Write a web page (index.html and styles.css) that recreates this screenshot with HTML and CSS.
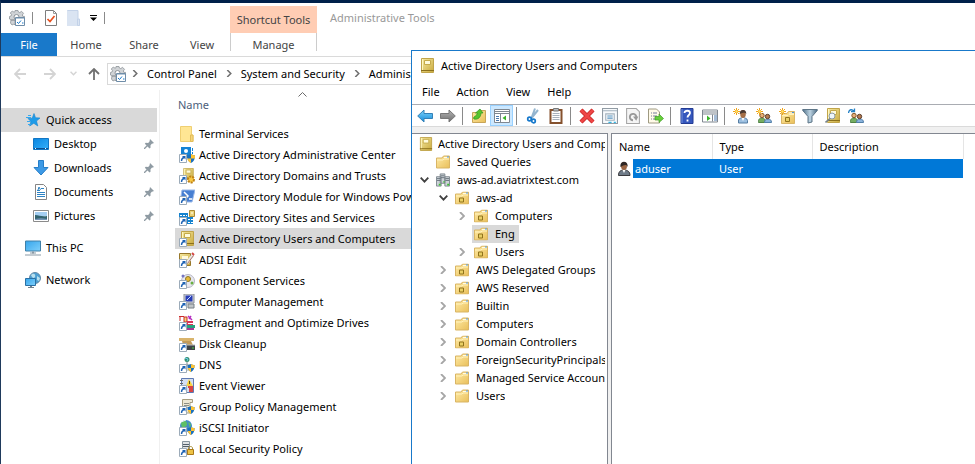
FILE: index.html
```html
<!DOCTYPE html>
<html lang="en">
<head>
<meta charset="utf-8">
<title>Administrative Tools</title>
<link rel="stylesheet" href="styles.css">
</head>
<body>
<svg class="defs" aria-hidden="true">
  <defs>
    <linearGradient id="g-folder" x1="0" y1="0" x2="1" y2="1"><stop offset="0" stop-color="#ffeba6"/><stop offset="1" stop-color="#e9bf5a"/></linearGradient>
    <linearGradient id="g-book" x1="0" y1="0" x2="1" y2="1"><stop offset="0" stop-color="#f6eaa2"/><stop offset="1" stop-color="#c9a93c"/></linearGradient>
    <linearGradient id="g-screen" x1="0" y1="0" x2="1" y2="1"><stop offset="0" stop-color="#35a5ec"/><stop offset="1" stop-color="#7fd0fb"/></linearGradient>
    <linearGradient id="g-desk" x1="0" y1="0" x2="1" y2="1"><stop offset="0" stop-color="#0a86e0"/><stop offset="1" stop-color="#35b0fb"/></linearGradient>
    <linearGradient id="g-blue" x1="0" y1="0" x2="0" y2="1"><stop offset="0" stop-color="#7fd4fb"/><stop offset="1" stop-color="#1489d8"/></linearGradient>
    <linearGradient id="g-grey" x1="0" y1="0" x2="0" y2="1"><stop offset="0" stop-color="#b5b5b5"/><stop offset="1" stop-color="#6d6d6d"/></linearGradient>
    <linearGradient id="g-funnel" x1="0" y1="0" x2="1" y2="0"><stop offset="0" stop-color="#4f7088"/><stop offset=".5" stop-color="#bcd3e2"/><stop offset="1" stop-color="#4b6a82"/></linearGradient>
  </defs>
  <symbol id="gear" viewBox="0 0 16 16">
    <path d="M6 .5h3l.4 1.500 1.400.6L12.500 1.300 14.500 3.300 13.300 5l.6 1.400H15.500V9L13 10H2L.5 9V6.500L2 6l.6-1.300L1.300 3l2-2L5 2.200l1-.5zM2 10h4v5l-1-1-2 1-1.500-2z" fill="#d0d3d6" stroke="#8d9398" stroke-width=".8"/>
    <circle cx="7.500" cy="7" r="2.500" fill="#fff" stroke="#8d9398"/>
    <path d="M6.500 7.500h9v8h-9z" fill="#fff" stroke="#6f8da8"/><path d="M7 8.500h8" stroke="#b6c8d8"/>
    <path d="m8 12 1.500 1.500L12 10.500M13 13h1.500" fill="none" stroke="#1979ca"/>
  </symbol>
  <symbol id="check" viewBox="0 0 12 16"><path d="M.5.500h8l3 3v12H.5z" fill="#fff" stroke="#7d7d7d"/><path d="M8.500.500v3h3" fill="none" stroke="#9a9a9a"/><path d="m2.500 9 2.500 2.500L9.500 6" fill="none" stroke="#e8501e" stroke-width="1.700"/></symbol>
  <symbol id="newfolder" viewBox="0 0 13 16"><path d="M0 0h11v9h2v7H0z" fill="#dae4f2"/><path d="M.5.500h10.500v9M10.500 9v6.500h2V9z" fill="none" stroke="#c3d2e8"/></symbol>
  <symbol id="star" viewBox="0 0 16 14"><path d="m9 .5 1.500 4.200L15 5l-3.500 3 1.300 5L8.800 10.300 4.700 13l1.200-4.600L3 5.500l4.200-.3z" fill="#1e9be8" stroke="#1683cf" stroke-width=".6"/><path d="M1 4.500h5M2 8.500h4M3 11.500h3M3 2.500h3" stroke="#35a8ef"/></symbol>
  <symbol id="desktop" viewBox="0 0 16 12"><path d="M.5.500h15v11H.5z" fill="url(#g-desk)" stroke="#1276c4"/><path d="M1 10.500h14" stroke="#0b4f91"/><path d="M2 10.500h2M12 10.500h2" stroke="#fff" stroke-dasharray="1 1"/></symbol>
  <symbol id="download" viewBox="0 0 16 16"><path d="M5.500.500h5v7h4.500L8 15 1 7.500h4.500z" fill="#3d9ae6" stroke="#267ec8"/></symbol>
  <symbol id="document" viewBox="0 0 12 16"><path d="M.5.500h8l3 3v12H.5z" fill="#fff" stroke="#858585"/><path d="M2 6.500h3M2 8.500h8M2 10.500h8M2 12.500h8M6 4.500h3" stroke="#2d83c4"/><path d="m3 6 1-3 1.500 3" fill="none" stroke="#2d83c4"/></symbol>
  <symbol id="picture" viewBox="0 0 16 12"><path d="M.5.500h15v11H.5z" fill="#fff" stroke="#8b8b8b"/><path d="M2 2h12v4H2z" fill="#a4cef2"/><path d="M2 5c4 0 7 2 12 1v4H2z" fill="#31636f"/><path d="M2 9c4-1 8-1 12 0v1H2z" fill="#7292b4"/></symbol>
  <symbol id="pc" viewBox="0 0 16 15"><path d="M.5.500h15v10H.5z" fill="url(#g-screen)" stroke="#4080a8"/><path d="M7 11h2v2H7z" fill="#8a9aa6"/><path d="M0 14.500h16M5 12.500h6" stroke="#8a9aa6"/></symbol>
  <symbol id="network" viewBox="0 0 16 16"><circle cx="10" cy="6" r="5.500" fill="#4c9fd2" stroke="#6288a4"/><path d="M6 3c3-3 5 0 4 2S7 6 6 3zM12 4l3 2-1 3-2-1z" fill="#b9e0ee"/><path d="M.5 6.500h10v7H.5z" fill="url(#g-screen)" stroke="#2b70a4"/><path d="M3 15.500h6M5 14.500h2" stroke="#72828e"/></symbol>
  <symbol id="pin" viewBox="0 0 10 10"><path d="M6 0l4 4-1.200.600L7.800 4.800 6.500 6.200v2.500L5.500 9.500 .8 4.800l.9-1 2.500.2L5.500 2.500z" fill="#8f9ba3"/><path d="M3.500 6.500 0 10" stroke="#8f9ba3" stroke-width="1.300"/></symbol>
  <symbol id="lnk" viewBox="0 0 16 16"><path d="M.5 7.500h7v8h-7z" fill="#fff" stroke="#9cabb9"/><path d="M2.500 14c0-2 .5-3 2.500-3.500" fill="none" stroke="#1d62b4" stroke-width="1.400"/><path d="M3 9h3.500v3.500z" fill="#1d62b4"/></symbol>
  <symbol id="shield" viewBox="0 0 8 9"><path d="M4 0c1.300 1 2.500 1.200 4 1.200C8 5 7 7.500 4 9 1 7.500 0 5 0 1.200 1.500 1.200 2.700 1 4 0z" fill="#1b70bd"/><path d="M4 0c1.300 1 2.500 1.200 4 1.200V4.500H4zM.4 4.500H4V9C2 8 .8 6.500.4 4.500z" fill="#ffc330"/></symbol>
  <symbol id="book" viewBox="0 0 13 15"><path d="M.5.500h12v14H.5z" fill="url(#g-book)" stroke="#c0a44a"/><path d="M3.500 2.500h6v4h-6z" fill="#fffbdc" stroke="#c5aa4a"/><path d="M0 12.500h13" stroke="#8b701c"/><path d="M1.500 1v11" stroke="#fff7bf"/></symbol>
  <symbol id="folder-tall" viewBox="0 0 14 16"><path d="M.5.500h11V9h1.500v6.500H.5z" fill="#ffe694" stroke="#efcf72"/><path d="M10.500 9v6.500H13V9z" fill="#f7d578" stroke="#e2bc59"/></symbol>
  <symbol id="s-center" viewBox="0 0 16 16"><path d="M2 0h10v11H2z" fill="#1482d4"/><circle cx="7" cy="4" r="2" fill="#fff"/><path d="M13.500 1v6" stroke="#1482d4" stroke-dasharray="3 1"/><use href="#lnk" width="16" height="16"/><use href="#shield" x="8" y="7" width="8" height="9"/></symbol>
  <symbol id="s-trust" viewBox="0 0 16 16"><use href="#book" x="3" y="0" width="13" height="12"/><use href="#lnk" width="16" height="16"/><circle cx="12" cy="11.500" r="3" fill="#f8c844" stroke="#bf8115" stroke-width="2" stroke-dasharray="2 1"/></symbol>
  <symbol id="s-shell" viewBox="0 0 16 16"><path d="M3 1h13l-3 12H1z" fill="#477fd2" stroke="#9ab9e9"/><path d="m5 3 4 4-4 4M10 10h3" stroke="#fff" stroke-width="1.500" fill="none"/><use href="#lnk" width="16" height="16"/></symbol>
  <symbol id="s-sites" viewBox="0 0 16 16"><path d="M0 3h9v5H0zM8 7h6v7H8z" fill="#1683cf"/><path d="M1 5.500h7M9 9.500h5M9 12.500h5" stroke="#fff" stroke-dasharray="2 1"/><path d="M10.500.500h5v6h-5z" fill="#ead277" stroke="#ac8a34"/><path d="M12 3h2" stroke="#fff"/><use href="#lnk" width="16" height="16"/></symbol>
  <symbol id="s-users" viewBox="0 0 16 16"><use href="#book" x="2" y="0" width="13" height="15"/><use href="#lnk" width="16" height="16"/></symbol>
  <symbol id="s-adsi" viewBox="0 0 16 16"><path d="M.5 1.500h11v12H.5z" fill="url(#g-book)" stroke="#98782a"/><path d="M3 4h6v3H3z" fill="#fff9dc"/><path d="m8 11 6-8" stroke="#e7e7e7" stroke-width="3"/><path d="m8.500 11.500 6-8" stroke="#b1756b"/><path d="m13 1 2 2" stroke="#d44845" stroke-width="2"/><use href="#lnk" width="16" height="16"/></symbol>
  <symbol id="s-component" viewBox="0 0 16 16"><circle cx="9" cy="8" r="6.500" fill="#e7e7ee" stroke="#b7b7c5"/><circle cx="9" cy="6" r="2.500" fill="#e8bb36" stroke="#8c7628"/><circle cx="13" cy="10" r="1.500" fill="#68af42"/><circle cx="4" cy="3" r="1.500" fill="#7474c2"/><use href="#lnk" width="16" height="16"/></symbol>
  <symbol id="s-computer" viewBox="0 0 16 16"><path d="M5 0h10v9H5z" fill="#d2d4d8" stroke="#8c9098"/><path d="M6.500 1.500h7v6h-7z" fill="#283eb8"/><path d="m8 6 4-4" stroke="#c9dcff"/><path d="M9 10h6v4H9z" fill="#bfc4c7" stroke="#788087"/><use href="#lnk" width="16" height="16"/></symbol>
  <symbol id="s-defrag" viewBox="0 0 16 16"><path d="M0 1.500h5M1 2v4M5 2h3v5H5z" stroke="#ca2a2a" fill="#f2d67a"/><path d="m9 1 4 4M12 1l-2 3" stroke="#b52cc0" stroke-width="1.500"/><path d="M8 6h6v4H8z" fill="#d93558"/><path d="M8 10h8v3H8z" fill="#26a37d"/><path d="M8 13h7v2H8z" fill="#a93994"/><path d="M9 8.500h6" stroke="#fff"/><use href="#lnk" width="16" height="16"/></symbol>
  <symbol id="s-disk" viewBox="0 0 16 16"><path d="M0 2h15v3H0z" fill="#d9b46c"/><path d="M3 5h9l2 4H4z" fill="#c29b5a"/><path d="M8 9h8v5H8z" fill="#3f4346"/><path d="M8 9h8" stroke="#b9bdc0"/><path d="M13 12h2" stroke="#48cd45"/><use href="#lnk" width="16" height="16"/></symbol>
  <symbol id="s-dns" viewBox="0 0 16 16"><circle cx="8" cy="2.500" r="2.500" fill="#33916d"/><path d="m6 1 3 1-1 2" stroke="#72caf2" fill="none"/><path d="M8 5v3M3 8h10" stroke="#7d8890"/><path d="M8 8h5v6H8z" fill="#ccd3d8"/><use href="#lnk" width="16" height="16"/><use href="#shield" x="8" y="7" width="8" height="8"/></symbol>
  <symbol id="s-event" viewBox="0 0 16 16"><path d="M2.500.500h12v14h-12z" fill="#d3def2" stroke="#5d79b2"/><path d="M1 2.500h3M1 5.500h3" stroke="#666"/><path d="m10 1 4 7H7z" fill="#f7d241"/><path d="M10.500 3v3" stroke="#594d13"/><path d="M9 9h4v2h-2v2h3" fill="none" stroke="#d94545" stroke-width="2"/><use href="#lnk" width="16" height="16"/></symbol>
  <symbol id="s-group" viewBox="0 0 16 16"><path d="M3.500.500h10v3H11V14H3.500z" fill="#eee8d4" stroke="#a79d7e"/><path d="M5 4.500h5M5 6.500h5" stroke="#8c8e85"/><use href="#lnk" width="16" height="16"/><use href="#shield" x="8" y="7" width="8" height="8"/></symbol>
  <symbol id="s-iscsi" viewBox="0 0 16 16"><circle cx="7" cy="6" r="6" fill="#418cc4"/><path d="M2 3c3-4 6-2 6 1S5 7 3 8zM9 2l3 2-1 4z" fill="#5ec064"/><path d="M2 2 7 0" stroke="#eff8ff"/><use href="#lnk" width="16" height="16"/><use href="#shield" x="8" y="7" width="8" height="8"/></symbol>
  <symbol id="s-security" viewBox="0 0 16 16"><path d="M3.500.500h7v13h-7z" fill="#dfe3e6" stroke="#87949e"/><path d="M4 3.500h6M4 5.500h6" stroke="#54606a"/><path d="M9.500 9V7c0-2 4-2 4 0v2" fill="none" stroke="#a8903d"/><path d="M8.500 8.500h6v5h-6z" fill="#edc245" stroke="#a97818"/><use href="#lnk" width="16" height="16"/></symbol>
  <symbol id="folder" viewBox="0 0 14 13"><path d="M.5 12.500v-10H6L7.500.500h6v12z" fill="url(#g-folder)" stroke="#d9b565"/><path d="M8 2h5" stroke="#fffbe8"/><path d="M11 1.500h2" stroke="#4a93d8"/><path d="M1 4.500h6l1-1h5" fill="none" stroke="#fff2bc"/></symbol>
  <symbol id="ou" viewBox="0 0 14 13"><use href="#folder" width="14" height="13"/><path d="M4.500 6.500h4v4h-4z" fill="#e9cf63" stroke="#90731d"/></symbol>
  <symbol id="domain" viewBox="0 0 15 14"><path d="M4.500.500h5v10h-5zM.5 3.500h5v10h-5zM9.500 3.500h5v10h-5z" fill="#cdd3d8" stroke="#7b858d"/><path d="M5 2.500h4M5 4.500h4M1 5.500h4M1 7.500h4M10 5.500h4M10 7.500h4" stroke="#66727b"/><path d="M3 12h2M12 12h2M8 9h1" stroke="#39c42b" stroke-width="2"/></symbol>
  <symbol id="t-back" viewBox="0 0 16 14"><path d="M.7 7 7 1v3.500h8.500v5H7V13z" fill="url(#g-blue)" stroke="#3481b7"/></symbol>
  <symbol id="t-fwd" viewBox="0 0 16 14"><path d="M15.300 7 9 1v3.500H.5v5H9V13z" fill="url(#g-grey)" stroke="#777"/></symbol>
  <symbol id="t-up" viewBox="0 0 16 16"><path d="M1.500 14.500v-10h6l1-2h6v12z" fill="url(#g-folder)" stroke="#c8a558"/><path d="M2.500 10C3 8 6 8 6.500 5H4.500L9 1l3 4H10c0 4-3 7-7 6z" fill="#57c52c" stroke="#2e921f" stroke-width=".7"/></symbol>
  <symbol id="t-tree" viewBox="0 0 16 14"><path d="M.5.500h15v13H.5z" fill="#fff" stroke="#7f8790"/><path d="M1 2.500h14M1 4.500h14M6.500 5v8" stroke="#7f8790"/><path d="M2 7.500h3M2 9.500h3M2 11.500h3" stroke="#4a78ad"/><path d="M12 6.500v5L8.500 9z" fill="#3ab429"/></symbol>
  <symbol id="t-cut" viewBox="0 0 13 16"><path d="M8.500.500 5 10M11.500 2 5 10" stroke="#94b5cf" stroke-width="2"/><circle cx="3" cy="11" r="1.800" fill="none" stroke="#1678cb" stroke-width="1.700"/><circle cx="7" cy="13" r="1.800" fill="none" stroke="#1678cb" stroke-width="1.700"/></symbol>
  <symbol id="t-paste" viewBox="0 0 13 16"><path d="M1 2h11v13H1z" fill="#fff" stroke="#85512d" stroke-width="2"/><path d="M4 .5h5V3H4z" fill="#b8bcc0" stroke="#777"/><path d="M3 5.500h7M3 7.500h7M3 9.500h7M3 11.500h7" stroke="#a8b2bd"/></symbol>
  <symbol id="t-del" viewBox="0 0 16 16"><path d="m2 2 12 12M14 2 2 14" stroke="#c92a2a" stroke-width="4.400"/><path d="m2 2 12 12M14 2 2 14" stroke="#ef4545" stroke-width="2.600"/></symbol>
  <symbol id="t-props" viewBox="0 0 15 15"><path d="M.5.500h14v14H.5z" fill="#f7fafc" stroke="#919ba4"/><path d="M1 2.500h13M3 5.500h9M3 11.500h9M3.500 5v7M11.500 5v7" stroke="#a3b1bc"/><path d="M5 7.500h5M5 9.500h5" stroke="#5994bf"/><path d="M6 13.500h3M11 13.500h2" stroke="#36b8e5"/></symbol>
  <symbol id="t-refresh" viewBox="0 0 13 15"><path d="M.5.500h9l3 3v11H.5z" fill="#f5f5f5" stroke="#a6a6a6"/><path d="M9.500 9A3 3 0 1 0 6.500 11.500" fill="none" stroke="#999" stroke-width="1.800"/><path d="M6.500 8h5l-2 4z" fill="#999"/></symbol>
  <symbol id="t-export" viewBox="0 0 16 15"><path d="M.5.500h8l3 3v11H.5z" fill="#fffae8" stroke="#9f9a82"/><path d="M3 4.500h1M5 4.500h4M3 7.500h1M5 7.500h4M3 10.500h1M5 10.500h4" stroke="#777d9c"/><path d="M7 8h4V5.500L15.500 10 11 14v-2.500H7z" fill="#66cf3a" stroke="#419b26" stroke-width=".7"/></symbol>
  <symbol id="t-help" viewBox="0 0 13 16"><path d="M.5.500h12v15H.5z" fill="#3557bd" stroke="#233b93"/><path d="M1.500 1v14" stroke="#7592df"/><path d="M4 5c0-3 5.500-3 5.500 0C9.500 7 7 7 7 9.500M7 11.500v2" fill="none" stroke="#fff" stroke-width="1.800"/></symbol>
  <symbol id="t-pane" viewBox="0 0 16 13"><path d="M.5.500h15v12H.5z" fill="#fff" stroke="#7f8790"/><path d="M1 2.500h14M1 4.500h14M10.500 5v7" stroke="#7f8790"/><path d="M12 6.500h3M12 8.500h3M12 10.500h3" stroke="#4a78ad"/><path d="M5 6v5.500L8.500 9z" fill="#3ab429"/></symbol>
  <symbol id="spark" viewBox="0 0 7 7"><path d="M3.500 0v7M0 3.500h7M1 1l5 5M6 1 1 6" stroke="#efa41b"/><circle cx="3.500" cy="3.500" r="1.300" fill="#ffe16b"/></symbol>
  <symbol id="man" viewBox="0 0 10 15"><path d="M.5 14V11C1 9 3 9 5 9s4 0 4.500 2.500V14z" fill="#9cbfe0" stroke="#557da3"/><path d="m3.500 9 1.500 3 1.500-3z" fill="#fff"/><ellipse cx="5" cy="5" rx="2.800" ry="4" fill="#a56f47"/><path d="M1.800 5C1-.5 9-.5 8.200 5 7 3 5 4 1.800 5z" fill="#4b3a33"/></symbol>
  <symbol id="t-user" viewBox="0 0 16 16"><use href="#man" x="5" y="1" width="10" height="15"/><use href="#spark" width="7" height="7"/></symbol>
  <symbol id="pair" viewBox="0 0 14 11"><path d="M.5 10.500C0 7 2 6 4 6s3.500 1 3.500 4.500z" fill="#75ad61" stroke="#4f8244"/><path d="M6.500 10.500C6.500 8 8 7 10 7s3.500 1 3.500 3.500z" fill="#8ab3dc" stroke="#527fa8"/><circle cx="4" cy="3.500" r="2.200" fill="#e5ae78" stroke="#85592c"/><circle cx="9.500" cy="4.500" r="2.200" fill="#b57a50" stroke="#5b3e2c"/></symbol>
  <symbol id="t-group" viewBox="0 0 16 16"><use href="#pair" x="2" y="4" width="14" height="11"/><use href="#spark" width="7" height="7"/></symbol>
  <symbol id="t-ou" viewBox="0 0 16 16"><use href="#ou" x="2" y="3" width="14" height="13"/><use href="#spark" width="7" height="7"/></symbol>
  <symbol id="t-filter" viewBox="0 0 16 15"><path d="M.7 1h14.600v1L10 8v5.500L6 14.500V8L.7 2z" fill="url(#g-funnel)" stroke="#5e7688"/></symbol>
  <symbol id="t-find" viewBox="0 0 16 16"><use href="#book" x="2" y="0" width="13" height="15"/><circle cx="7" cy="8" r="3" fill="#eef6fa" stroke="#8b99a1"/><path d="m5 10.500-4.500 4" stroke="#77838a" stroke-width="1.600"/></symbol>
  <symbol id="t-addgroup" viewBox="0 0 16 16"><use href="#pair" x="2" y="4" width="14" height="11"/><path d="M.5 5C1 1 4 1 6 3M6.500.500V3.500H3" fill="none" stroke="#227fc4" stroke-width="1.300"/></symbol>
  <symbol id="aduser" viewBox="0 0 13 16"><path d="M.5 14.500c0-4 2-5.500 5.500-5.500s6 1.500 6 5.500z" fill="#6f7b88" stroke="#39393d"/><path d="m4.500 9 1.500 3 1.500-3z" fill="#fff"/><ellipse cx="6" cy="5" rx="3" ry="4" fill="#9a6543"/><path d="M2.500 6C1-1 11-1 9.500 6 9 3 6 3.500 2.500 6z" fill="#2e2624"/></symbol>
  <symbol id="c-right" viewBox="0 0 6 8"><path d="m1 0 4 4-4 4" fill="none" stroke="currentColor" stroke-width="1.800"/></symbol>
  <symbol id="c-down" viewBox="0 0 9 6"><path d="m.7.700 3.800 4 3.800-4" fill="none" stroke="currentColor" stroke-width="1.800"/></symbol>
  <symbol id="arrow" viewBox="0 0 12 12"><path d="M12 6H1M6 1 1 6l5 5" fill="none" stroke="currentColor" stroke-width="1.800"/></symbol>
</svg>

<main class="explorer">
  <header class="titlebar">
    <div class="quick-tools">
      <svg class="i16"><use href="#gear"/></svg>
      <span class="rule"></span>
      <button class="plain" aria-label="Properties"><svg class="i12x16"><use href="#check"/></svg></button>
      <button class="plain" aria-label="New folder"><svg class="i13x16"><use href="#newfolder"/></svg></button>
      <button class="plain" aria-label="Customize"><svg class="drop" viewBox="0 0 7 6"><path d="M0 0h7v1H0zM0 2.500h7L3.500 6z"/></svg></button>
      <span class="rule"></span>
    </div>
    <div class="context-title">Shortcut Tools</div>
    <h1 class="caption">Administrative Tools</h1>
  </header>
  <nav class="tabs">
    <button class="tab file">File</button>
    <button class="tab">Home</button>
    <button class="tab">Share</button>
    <button class="tab">View</button>
    <button class="tab manage">Manage</button>
  </nav>
  <div class="address-row">
    <button class="plain off" aria-label="Back"><svg class="i12"><use href="#arrow"/></svg></button>
    <button class="plain off fwd" aria-label="Forward"><svg class="i12"><use href="#arrow"/></svg></button>
    <button class="plain off" aria-label="Recent"><svg class="tiny"><use href="#c-down"/></svg></button>
    <button class="plain up" aria-label="Up"><svg class="i12"><use href="#arrow"/></svg></button>
    <div class="address">
      <svg class="i16"><use href="#gear"/></svg>
      <svg class="crumb"><use href="#c-right"/></svg><a href="#">Control Panel</a>
      <svg class="crumb"><use href="#c-right"/></svg><a href="#">System and Security</a>
      <svg class="crumb"><use href="#c-right"/></svg><a href="#">Administrative Tools</a>
    </div>
  </div>
  <div class="body">
    <nav class="places">
      <a href="#" class="place root selected"><svg class="i16"><use href="#star"/></svg>Quick access</a>
      <a href="#" class="place"><svg class="i16"><use href="#desktop"/></svg><span>Desktop</span><svg class="pin"><use href="#pin"/></svg></a>
      <a href="#" class="place"><svg class="i16"><use href="#download"/></svg><span>Downloads</span><svg class="pin"><use href="#pin"/></svg></a>
      <a href="#" class="place"><svg class="i16"><use href="#document"/></svg><span>Documents</span><svg class="pin"><use href="#pin"/></svg></a>
      <a href="#" class="place"><svg class="i16"><use href="#picture"/></svg><span>Pictures</span><svg class="pin"><use href="#pin"/></svg></a>
      <a href="#" class="place root spaced"><svg class="i16"><use href="#pc"/></svg>This PC</a>
      <a href="#" class="place root spaced"><svg class="i16"><use href="#network"/></svg>Network</a>
    </nav>
    <section class="files">
      <div class="file-head">
        <svg class="sort" viewBox="0 0 9 5"><path d="M.5 4.500l4-4 4 4" fill="none" stroke="#6b6b6b"/></svg>
        <span>Name</span>
      </div>
      <ul class="file-list">
        <li><svg class="i16"><use href="#folder-tall"/></svg>Terminal Services</li>
        <li><svg class="i16"><use href="#s-center"/></svg>Active Directory Administrative Center</li>
        <li><svg class="i16"><use href="#s-trust"/></svg>Active Directory Domains and Trusts</li>
        <li><svg class="i16"><use href="#s-shell"/></svg>Active Directory Module for Windows PowerShell</li>
        <li><svg class="i16"><use href="#s-sites"/></svg>Active Directory Sites and Services</li>
        <li class="selected"><svg class="i16"><use href="#s-users"/></svg>Active Directory Users and Computers</li>
        <li><svg class="i16"><use href="#s-adsi"/></svg>ADSI Edit</li>
        <li><svg class="i16"><use href="#s-component"/></svg>Component Services</li>
        <li><svg class="i16"><use href="#s-computer"/></svg>Computer Management</li>
        <li><svg class="i16"><use href="#s-defrag"/></svg>Defragment and Optimize Drives</li>
        <li><svg class="i16"><use href="#s-disk"/></svg>Disk Cleanup</li>
        <li><svg class="i16"><use href="#s-dns"/></svg>DNS</li>
        <li><svg class="i16"><use href="#s-event"/></svg>Event Viewer</li>
        <li><svg class="i16"><use href="#s-group"/></svg>Group Policy Management</li>
        <li><svg class="i16"><use href="#s-iscsi"/></svg>iSCSI Initiator</li>
        <li><svg class="i16"><use href="#s-security"/></svg>Local Security Policy</li>
      </ul>
    </section>
  </div>
</main>

<section class="console">
  <header class="console-title"><svg class="i13x15"><use href="#book"/></svg><h2>Active Directory Users and Computers</h2></header>
  <nav class="menu"><button>File</button><button>Action</button><button>View</button><button>Help</button></nav>
  <div class="toolbar">
    <button aria-label="Back"><svg><use href="#t-back"/></svg></button>
    <button aria-label="Forward"><svg><use href="#t-fwd"/></svg></button>
    <span class="sep"></span>
    <button aria-label="Up one level"><svg><use href="#t-up"/></svg></button>
    <button aria-label="Show tree" class="pressed"><svg><use href="#t-tree"/></svg></button>
    <span class="sep"></span>
    <button aria-label="Cut"><svg><use href="#t-cut"/></svg></button>
    <button aria-label="Paste"><svg><use href="#t-paste"/></svg></button>
    <span class="sep"></span>
    <button aria-label="Delete"><svg><use href="#t-del"/></svg></button>
    <button aria-label="Properties"><svg><use href="#t-props"/></svg></button>
    <button aria-label="Refresh"><svg><use href="#t-refresh"/></svg></button>
    <button aria-label="Export list"><svg><use href="#t-export"/></svg></button>
    <span class="sep"></span>
    <button aria-label="Help"><svg><use href="#t-help"/></svg></button>
    <button aria-label="Show action pane"><svg><use href="#t-pane"/></svg></button>
    <span class="sep"></span>
    <button aria-label="New user"><svg><use href="#t-user"/></svg></button>
    <button aria-label="New group"><svg><use href="#t-group"/></svg></button>
    <button aria-label="New organizational unit"><svg><use href="#t-ou"/></svg></button>
    <button aria-label="Filter"><svg><use href="#t-filter"/></svg></button>
    <button aria-label="Find"><svg><use href="#t-find"/></svg></button>
    <button aria-label="Add to group"><svg><use href="#t-addgroup"/></svg></button>
  </div>
  <div class="panes">
    <ul class="tree">
      <li class="top"><svg class="node"><use href="#book"/></svg><span>Active Directory Users and Computers</span></li>
      <li class="l1"><i class="exp"></i><svg class="node"><use href="#folder"/></svg><span>Saved Queries</span></li>
      <li class="l1"><i class="exp open"><svg><use href="#c-down"/></svg></i><svg class="node"><use href="#domain"/></svg><span>aws-ad.aviatrixtest.com</span></li>
      <li class="l2"><i class="exp open"><svg><use href="#c-down"/></svg></i><svg class="node"><use href="#ou"/></svg><span>aws-ad</span></li>
      <li class="l3"><i class="exp"><svg><use href="#c-right"/></svg></i><svg class="node"><use href="#ou"/></svg><span>Computers</span></li>
      <li class="l3"><i class="exp"></i><b class="picked"><svg class="node"><use href="#ou"/></svg><span>Eng</span></b></li>
      <li class="l3"><i class="exp"><svg><use href="#c-right"/></svg></i><svg class="node"><use href="#ou"/></svg><span>Users</span></li>
      <li class="l2"><i class="exp"><svg><use href="#c-right"/></svg></i><svg class="node"><use href="#ou"/></svg><span>AWS Delegated Groups</span></li>
      <li class="l2"><i class="exp"><svg><use href="#c-right"/></svg></i><svg class="node"><use href="#ou"/></svg><span>AWS Reserved</span></li>
      <li class="l2"><i class="exp"><svg><use href="#c-right"/></svg></i><svg class="node"><use href="#folder"/></svg><span>Builtin</span></li>
      <li class="l2"><i class="exp"><svg><use href="#c-right"/></svg></i><svg class="node"><use href="#folder"/></svg><span>Computers</span></li>
      <li class="l2"><i class="exp"><svg><use href="#c-right"/></svg></i><svg class="node"><use href="#ou"/></svg><span>Domain Controllers</span></li>
      <li class="l2"><i class="exp"><svg><use href="#c-right"/></svg></i><svg class="node"><use href="#folder"/></svg><span>ForeignSecurityPrincipals</span></li>
      <li class="l2"><i class="exp"><svg><use href="#c-right"/></svg></i><svg class="node"><use href="#folder"/></svg><span>Managed Service Accounts</span></li>
      <li class="l2"><i class="exp"><svg><use href="#c-right"/></svg></i><svg class="node"><use href="#folder"/></svg><span>Users</span></li>
    </ul>
    <div class="results">
      <table>
        <thead><tr><th class="short">Name</th><th class="short">Type</th><th class="long">Description</th></tr></thead>
        <tbody><tr>
          <td><div class="entry"><svg><use href="#aduser"/></svg><span>aduser</span></div></td>
          <td class="hit">User</td>
          <td class="hit"></td>
        </tr></tbody>
      </table>
    </div>
  </div>
</section>
</body>
</html>
```
FILE: styles.css
```css
* { box-sizing: border-box; }

body {
  margin: 0;
  height: 100vh;
  overflow: hidden;
  position: relative;
  background: #fff;
  color: #000;
  font: 11px/18px "Noto Sans", "Open Sans", sans-serif;
}

svg { display: block; flex: none; }
button { font: inherit; color: inherit; background: none; border: 0; margin: 0; padding: 0; }
a { color: inherit; text-decoration: none; }
h1, h2 { margin: 0; font-size: inherit; font-weight: 400; }
ul { list-style: none; margin: 0; padding: 0; }

.defs { position: absolute; width: 0; height: 0; }
.i16 { width: 16px; height: 16px; }
.i12 { width: 12px; height: 12px; }
.i12x16 { width: 12px; height: 16px; }
.i13x16 { width: 13px; height: 16px; }
.i13x15 { width: 13px; height: 15px; }

/* Explorer window */
.explorer {
  height: 100%;
  display: flex;
  flex-direction: column;
  border-top: 3px solid #00204a;
  border-left: 1px solid #1f3a5c;
  overflow: hidden;
}

.titlebar { display: flex; height: 30px; }
.quick-tools { display: flex; align-items: center; gap: 10px; width: 229px; padding-left: 8px; }
.rule { width: 1px; height: 12px; background: #8a8a8a; }
.quick-tools .rule { margin: 0 0 0 -3px; }
.quick-tools .rule + button { margin-left: 2px; }
.drop { width: 7px; height: 6px; }
.context-title {
  width: 87px;
  margin-top: 3px;
  line-height: 27px;
  text-align: center;
  background: #ffcdb4;
  color: #444;
}
.caption { margin-left: 13px; line-height: 30px; color: #999; }

.tabs { display: flex; height: 24px; border-bottom: 1px solid #dadada; color: #444; }
.tab { width: 58px; line-height: 23px; text-align: center; }
.tab.file { width: 56px; background: #1979ca; color: #fff; }
.tab.manage {
  width: 87px;
  height: 18px;
  margin-left: -1px;
  border: solid #ccc;
  border-width: 0 1px;
}

.address-row { display: flex; align-items: center; height: 33px; padding-left: 13px; color: #707070; }
.off { color: #d4d4d4; margin-right: 18px; }
.off.fwd { margin-right: 14px; }
.fwd svg { transform: rotate(180deg); }
.off + .up { margin-left: -7px; }
.up { margin-right: 7px; }
.up svg { transform: rotate(90deg); }
.tiny { width: 7px; height: 5px; }
.address {
  flex: 1;
  display: flex;
  align-items: center;
  height: 22px;
  padding-left: 2px;
  border: 1px solid #d9d9d9;
  white-space: nowrap;
  min-width: 0;
}
.address a { color: #000; }
.crumb { width: 6px; height: 7px; margin: 0 9px; }
.address .i16 + .crumb { margin-left: 6px; }

.body { flex: 1; display: flex; min-height: 0; }
.places { width: 159px; padding-top: 18px; border-right: 1px solid #f0f0f0; }
.place { display: flex; align-items: center; gap: 5px; height: 24px; padding: 0 5px 0 32px; }
.place span { flex: 1; }
.place.root { padding-left: 24px; margin-right: 2px; }
.place.spaced { margin-top: 8px; }
.place.selected { background: #d9d9d9; }
.pin { width: 10px; height: 10px; }

.files { flex: 1; padding-left: 15px; min-width: 0; }
.file-head { height: 33px; padding: 2px 0 0 3px; color: #4c607a; }
.sort { width: 9px; height: 5px; margin-left: 120px; }
.file-head span { display: block; line-height: 16px; }
.file-list li {
  display: flex;
  align-items: center;
  gap: 4px;
  height: 21px;
  padding-left: 4px;
  white-space: nowrap;
}
.file-list .selected { background: #d9d9d9; }

/* Management console window */
.console {
  position: absolute;
  top: 50px;
  left: 411px;
  right: 0;
  bottom: 0;
  display: flex;
  flex-direction: column;
  background: #f0f0f0;
  border: solid #1979ca;
  border-width: 1px 0 0 1px;
}
.console-title { display: flex; align-items: center; gap: 7px; height: 29px; padding-left: 9px; background: #fff; }
.menu { display: flex; gap: 17px; height: 25px; padding-left: 10px; background: #fff; border-bottom: 1px solid #a9acb2; }
.toolbar { display: flex; height: 22px; padding-left: 1px; background: #fff; border-bottom: 1px solid #dadada; }
.toolbar button { width: 23px; height: 21px; display: grid; place-items: center; }
.toolbar svg { width: 16px; height: 16px; }
.toolbar .pressed { background: #cce8ff; border: 1px solid #99d1ff; }
.sep { width: 1px; height: 18px; margin: 2px 4px 0 3px; background: #8a8a8a; }

.panes { flex: 1; display: flex; gap: 3px; min-height: 0; padding-top: 6px; }
.tree {
  width: 196px;
  flex: none;
  padding-top: 1px;
  background: #fff;
  border: solid #828790;
  border-width: 1px 1px 0 0;
  overflow: hidden;
}
.tree li { display: flex; align-items: center; height: 18px; padding-right: 2px; white-space: nowrap; }
.tree span { min-width: 0; overflow: hidden; }
.tree .top { padding-left: 7px; }
.tree .l1 { padding-left: 5px; }
.tree .l2 { padding-left: 24px; }
.tree .l3 { padding-left: 43px; }
.node { width: 14px; height: 14px; margin-right: 7px; }
.top .node { margin-right: 5px; }
.exp { flex: none; width: 19px; padding-left: 4px; color: #a6a6a6; }
.exp svg { width: 6px; height: 8px; }
.exp.open { padding-left: 3px; color: #404040; }
.exp.open svg { width: 9px; height: 6px; }
.picked {
  display: flex;
  align-items: center;
  height: 18px;
  margin-left: -2px;
  padding: 0 4px 0 2px;
  font-weight: 400;
  background: #d9d9d9;
}

.results { flex: 1; min-width: 0; background: #fff; border: solid #828790; border-width: 1px 0 0 1px; }
table { width: 351px; table-layout: fixed; border-collapse: collapse; }
.short { width: 100px; }
.long { width: 151px; }
th { height: 25px; padding: 0 0 0 7px; font-weight: 400; text-align: left; border-right: 1px solid #e5e5e5; }
td { height: 19px; padding: 0; }
.entry { display: flex; align-items: center; padding-left: 6px; }
.entry svg { width: 13px; height: 16px; margin-right: 2px; }
.entry span { flex: 1; padding-left: 2px; line-height: 19px; color: #fff; background: #0078d7; }
.hit { padding-left: 7px; color: #fff; background: #0078d7; }
```
